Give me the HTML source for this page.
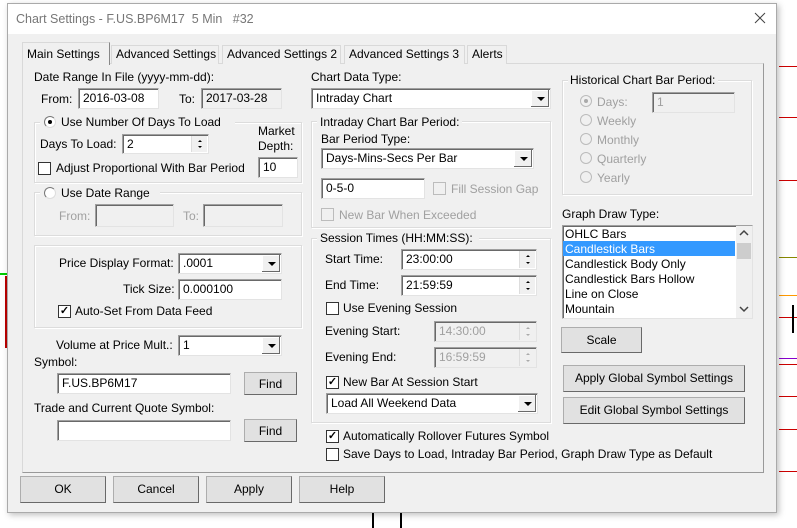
<!DOCTYPE html>
<html><head><style>
*{box-sizing:border-box}
body{margin:0;width:797px;height:528px;position:relative;overflow:hidden;background:#fff;font-family:"Liberation Sans",Arial,sans-serif;font-size:12px;color:#000}
.a{position:absolute}
.t{position:absolute;line-height:14px;white-space:nowrap}
.g{color:#a0a0a0}
.in{position:absolute;background:#fff;border:1px solid #a0a0a0;border-right-color:#e3e3e3;border-bottom-color:#e3e3e3;box-shadow:inset 1px 1px 0 #696969;padding:2px 0 0 4px;line-height:14px;white-space:nowrap}
.dis{background:#f0f0f0;color:#a0a0a0}
.sel{position:absolute;background:#fff;border:1px solid #a0a0a0;border-right-color:#e3e3e3;border-bottom-color:#e3e3e3;box-shadow:inset 1px 1px 0 #696969;padding:2px 0 0 4px;line-height:14px;white-space:nowrap}
.sel:after{content:"";position:absolute;right:1px;top:1px;bottom:1px;width:17px;background:#f0f0f0;border-right:1px solid #696969;border-bottom:1px solid #696969;box-shadow:inset 1px 1px 0 #fff}
.sel i{position:absolute;right:5px;top:50%;margin-top:-2px;border-left:4px solid transparent;border-right:4px solid transparent;border-top:4px solid #000;z-index:2}
.spin{position:absolute;right:1px;top:1px;bottom:1px;width:16px;background:#f0f0f0;border-left:1px solid #ddd}
.spin:before,.spin:after{content:"";position:absolute;left:6px;border-left:2px solid transparent;border-right:2px solid transparent}
.spin:before{top:4px;border-bottom:2px solid #000}
.spin:after{bottom:4px;border-top:2px solid #000}
.spin.d:before{border-bottom-color:#aaa}.spin.d:after{border-top-color:#aaa}
.grp{position:absolute;border:1px solid #dcdcdc;box-shadow:inset 1px 1px 0 #fff,1px 1px 0 #fff}
.btn{position:absolute;background:#e1e1e1;border:1px solid #adadad;border-right-color:#696969;border-bottom-color:#696969;text-align:center;line-height:22px}
.cb{position:absolute;width:13px;height:13px;background:#fff;border:1px solid #333;font-size:11px;line-height:11px;text-align:center;font-weight:bold}
.cb.d{border-color:#bcbcbc;background:#f0f0f0}
.rb{position:absolute;width:12px;height:12px;border-radius:50%;background:#fff;border:1px solid #777;border-right-color:#ddd;border-bottom-color:#ddd}
.rb.on:after{content:"";position:absolute;left:3px;top:3px;width:4px;height:4px;border-radius:50%;background:#000}
.rb.d{background:#f0f0f0;border-color:#bbb}
.rb.d.on:after{background:#aaa}
.tab{position:absolute;top:45px;height:19px;border:1px solid #d9d9d9;border-bottom:none;line-height:17px;padding-left:4px;background:#f0f0f0}
</style></head><body>
<!-- background chart bits -->
<div class="a" style="left:0;top:273px;width:8px;height:2px;background:#0c0"></div>
<div class="a" style="left:5px;top:276px;width:3px;height:72px;background:#b00"></div>
<div class="a" style="left:779px;top:66px;width:18px;height:1px;background:#c00"></div>
<div class="a" style="left:779px;top:117px;width:18px;height:1px;background:#c00"></div>
<div class="a" style="left:779px;top:180px;width:18px;height:1px;background:#c00"></div>
<div class="a" style="left:779px;top:257px;width:18px;height:1px;background:#880"></div>
<div class="a" style="left:779px;top:295px;width:18px;height:1px;background:#f90"></div>
<div class="a" style="left:779px;top:317px;width:18px;height:1px;background:#c00"></div>
<div class="a" style="left:779px;top:358px;width:18px;height:1px;background:#80c"></div>
<div class="a" style="left:779px;top:364px;width:18px;height:1px;background:#c00"></div>
<div class="a" style="left:779px;top:396px;width:18px;height:1px;background:#c00"></div>
<div class="a" style="left:779px;top:429px;width:18px;height:1px;background:#c00"></div>
<div class="a" style="left:779px;top:471px;width:18px;height:1px;background:#c00"></div>
<div class="a" style="left:792px;top:305px;width:2px;height:28px;background:#000"></div>
<div class="a" style="left:372px;top:512px;width:2px;height:16px;background:#000"></div>
<div class="a" style="left:400px;top:512px;width:2px;height:16px;background:#000"></div>
<!-- dialog -->
<div class="a" style="left:7px;top:3px;width:770px;height:510px;background:#f0f0f0;border:1px solid #aaa;box-shadow:2px 2px 6px rgba(0,0,0,.25)"></div>
<div class="a" style="left:8px;top:4px;width:768px;height:30px;background:#fff"></div>
<div class="t" style="left:16px;top:12px;color:#777;font-size:12.5px">Chart Settings - F.US.BP6M17&nbsp; 5 Min &nbsp; #32</div>
<svg class="a" style="left:754px;top:12px" width="12" height="12"><path d="M1 1L11 11M11 1L1 11" stroke="#444" stroke-width="1"/></svg>
<!-- tab panel -->
<div class="a" style="left:22px;top:63px;width:742px;height:410px;border:1px solid #d9d9d9;border-right-color:#999;border-bottom-color:#999"></div>
<div class="tab" style="left:111px;width:108px">Advanced Settings</div>
<div class="tab" style="left:222px;width:119px">Advanced Settings 2</div>
<div class="tab" style="left:344px;width:121px">Advanced Settings 3</div>
<div class="tab" style="left:467px;width:40px">Alerts</div>
<div class="tab" style="left:22px;top:42px;height:23px;width:88px;line-height:22px;border-right-color:#888">Main Settings</div>
<!-- left column -->
<div class="t" style="left:34px;top:70px">Date Range In File (yyyy-mm-dd):</div>
<div class="t" style="left:41px;top:92px">From:</div>
<div class="in" style="left:78px;top:88px;width:81px;height:21px">2016-03-08</div>
<div class="t" style="left:179px;top:92px">To:</div>
<div class="in" style="left:201px;top:88px;width:81px;height:21px;background:#f0f0f0">2017-03-28</div>

<div class="grp" style="left:34px;top:122px;width:268px;height:61px"></div>
<div class="a" style="left:40px;top:115px;width:195px;height:14px;background:#f0f0f0"></div>
<div class="rb on" style="left:44px;top:116px"></div>
<div class="t" style="left:61px;top:115px">Use Number Of Days To Load</div>
<div class="t" style="left:40px;top:137px">Days To Load:</div>
<div class="in" style="left:122px;top:134px;width:87px;height:20px">2<div class="spin"></div></div>
<div class="t" style="left:258px;top:124px">Market</div>
<div class="t" style="left:258px;top:139px">Depth:</div>
<div class="in" style="left:258px;top:157px;width:40px;height:21px">10</div>
<div class="cb" style="left:38px;top:162px"></div>
<div class="t" style="left:56px;top:161px">Adjust Proportional With Bar Period</div>

<div class="grp" style="left:34px;top:192px;width:268px;height:44px"></div>
<div class="a" style="left:40px;top:186px;width:120px;height:14px;background:#f0f0f0"></div>
<div class="rb" style="left:44px;top:187px"></div>
<div class="t" style="left:61px;top:186px">Use Date Range</div>
<div class="t g" style="left:59px;top:209px">From:</div>
<div class="in dis" style="left:95px;top:204px;width:79px;height:23px"></div>
<div class="t g" style="left:183px;top:209px">To:</div>
<div class="in dis" style="left:203px;top:204px;width:80px;height:23px"></div>

<div class="grp" style="left:34px;top:245px;width:268px;height:83px"></div>
<div class="t" style="left:59px;top:256px">Price Display Format:</div>
<div class="sel" style="left:178px;top:253px;width:104px;height:21px">.0001<i></i></div>
<div class="t" style="left:123px;top:282px">Tick Size:</div>
<div class="in" style="left:178px;top:279px;width:104px;height:21px">0.000100</div>
<div class="cb" style="left:58px;top:305px">✓</div>
<div class="t" style="left:75px;top:304px">Auto-Set From Data Feed</div>

<div class="t" style="left:56px;top:338px">Volume at Price Mult.:</div>
<div class="sel" style="left:178px;top:335px;width:104px;height:21px">1<i></i></div>
<div class="t" style="left:34px;top:355px">Symbol:</div>
<div class="in" style="left:57px;top:373px;width:174px;height:21px">F.US.BP6M17</div>
<div class="btn" style="left:244px;top:372px;width:53px;height:23px">Find</div>
<div class="t" style="left:34px;top:401px">Trade and Current Quote Symbol:</div>
<div class="in" style="left:57px;top:420px;width:174px;height:21px"></div>
<div class="btn" style="left:244px;top:419px;width:53px;height:23px">Find</div>

<!-- middle column -->
<div class="t" style="left:311px;top:70px">Chart Data Type:</div>
<div class="sel" style="left:311px;top:88px;width:240px;height:21px">Intraday Chart<i></i></div>
<div class="grp" style="left:311px;top:121px;width:240px;height:107px"></div>
<div class="a" style="left:317px;top:114px;width:145px;height:14px;background:#f0f0f0"></div>
<div class="t" style="left:320px;top:115px">Intraday Chart Bar Period:</div>
<div class="t" style="left:321px;top:132px">Bar Period Type:</div>
<div class="sel" style="left:321px;top:148px;width:213px;height:21px">Days-Mins-Secs Per Bar<i></i></div>
<div class="in" style="left:321px;top:178px;width:104px;height:21px">0-5-0</div>
<div class="cb d" style="left:433px;top:182px"></div>
<div class="t g" style="left:451px;top:182px">Fill Session Gap</div>
<div class="cb d" style="left:321px;top:208px"></div>
<div class="t g" style="left:339px;top:208px">New Bar When Exceeded</div>

<div class="grp" style="left:311px;top:238px;width:240px;height:185px"></div>
<div class="a" style="left:317px;top:231px;width:162px;height:14px;background:#f0f0f0"></div>
<div class="t" style="left:320px;top:231px">Session Times (HH:MM:SS):</div>
<div class="t" style="left:325px;top:252px">Start Time:</div>
<div class="in" style="left:401px;top:249px;width:136px;height:21px">23:00:00<div class="spin"></div></div>
<div class="t" style="left:325px;top:278px">End Time:</div>
<div class="in" style="left:401px;top:275px;width:136px;height:21px">21:59:59<div class="spin"></div></div>
<div class="cb" style="left:326px;top:302px"></div>
<div class="t" style="left:343px;top:301px">Use Evening Session</div>
<div class="t" style="left:325px;top:324px">Evening Start:</div>
<div class="in dis" style="left:434px;top:321px;width:103px;height:21px">14:30:00<div class="spin d"></div></div>
<div class="t" style="left:325px;top:350px">Evening End:</div>
<div class="in dis" style="left:434px;top:347px;width:103px;height:21px">16:59:59<div class="spin d"></div></div>
<div class="cb" style="left:326px;top:376px">✓</div>
<div class="t" style="left:343px;top:375px">New Bar At Session Start</div>
<div class="sel" style="left:326px;top:393px;width:212px;height:21px">Load All Weekend Data<i></i></div>
<div class="cb" style="left:326px;top:430px">✓</div>
<div class="t" style="left:343px;top:429px">Automatically Rollover Futures Symbol</div>
<div class="cb" style="left:326px;top:448px"></div>
<div class="t" style="left:343px;top:447px">Save Days to Load, Intraday Bar Period, Graph Draw Type as Default</div>

<!-- right column -->
<div class="grp" style="left:562px;top:80px;width:190px;height:115px"></div>
<div class="a" style="left:568px;top:73px;width:150px;height:14px;background:#f0f0f0"></div>
<div class="t" style="left:570px;top:73px">Historical Chart Bar Period:</div>
<div class="rb d on" style="left:580px;top:95px"></div><div class="t g" style="left:597px;top:95px">Days:</div>
<div class="in dis" style="left:652px;top:92px;width:83px;height:21px">1</div>
<div class="rb d" style="left:580px;top:114px"></div><div class="t g" style="left:597px;top:114px">Weekly</div>
<div class="rb d" style="left:580px;top:133px"></div><div class="t g" style="left:597px;top:133px">Monthly</div>
<div class="rb d" style="left:580px;top:152px"></div><div class="t g" style="left:597px;top:152px">Quarterly</div>
<div class="rb d" style="left:580px;top:171px"></div><div class="t g" style="left:597px;top:171px">Yearly</div>
<div class="t" style="left:562px;top:207px">Graph Draw Type:</div>
<div class="in" style="left:562px;top:225px;width:191px;height:94px;padding:0"></div>
<div class="t" style="left:565px;top:227px">OHLC Bars</div>
<div class="a" style="left:563px;top:241px;width:172px;height:15px;background:#3399ff"></div>
<div class="t" style="left:565px;top:242px;color:#fff">Candlestick Bars</div>
<div class="t" style="left:565px;top:257px">Candlestick Body Only</div>
<div class="t" style="left:565px;top:272px">Candlestick Bars Hollow</div>
<div class="t" style="left:565px;top:287px">Line on Close</div>
<div class="t" style="left:565px;top:302px">Mountain</div>
<div class="a" style="left:736px;top:226px;width:16px;height:92px;background:#f0f0f0"></div>
<div class="a" style="left:737px;top:243px;width:14px;height:16px;background:#cdcdcd"></div>
<svg class="a" style="left:739px;top:229px" width="10" height="8"><path d="M1 6L5 2L9 6" stroke="#444" stroke-width="1.5" fill="none"/></svg>
<svg class="a" style="left:739px;top:305px" width="10" height="8"><path d="M1 2L5 6L9 2" stroke="#444" stroke-width="1.5" fill="none"/></svg>
<div class="btn" style="left:561px;top:327px;width:81px;height:26px;line-height:24px">Scale</div>
<div class="btn" style="left:563px;top:365px;width:182px;height:27px;line-height:25px">Apply Global Symbol Settings</div>
<div class="btn" style="left:563px;top:397px;width:182px;height:27px;line-height:25px">Edit Global Symbol Settings</div>

<!-- bottom buttons -->
<div class="btn" style="left:20px;top:476px;width:86px;height:27px;line-height:25px">OK</div>
<div class="btn" style="left:113px;top:476px;width:86px;height:27px;line-height:25px">Cancel</div>
<div class="btn" style="left:206px;top:476px;width:86px;height:27px;line-height:25px">Apply</div>
<div class="btn" style="left:299px;top:476px;width:86px;height:27px;line-height:25px">Help</div>
</body></html>
